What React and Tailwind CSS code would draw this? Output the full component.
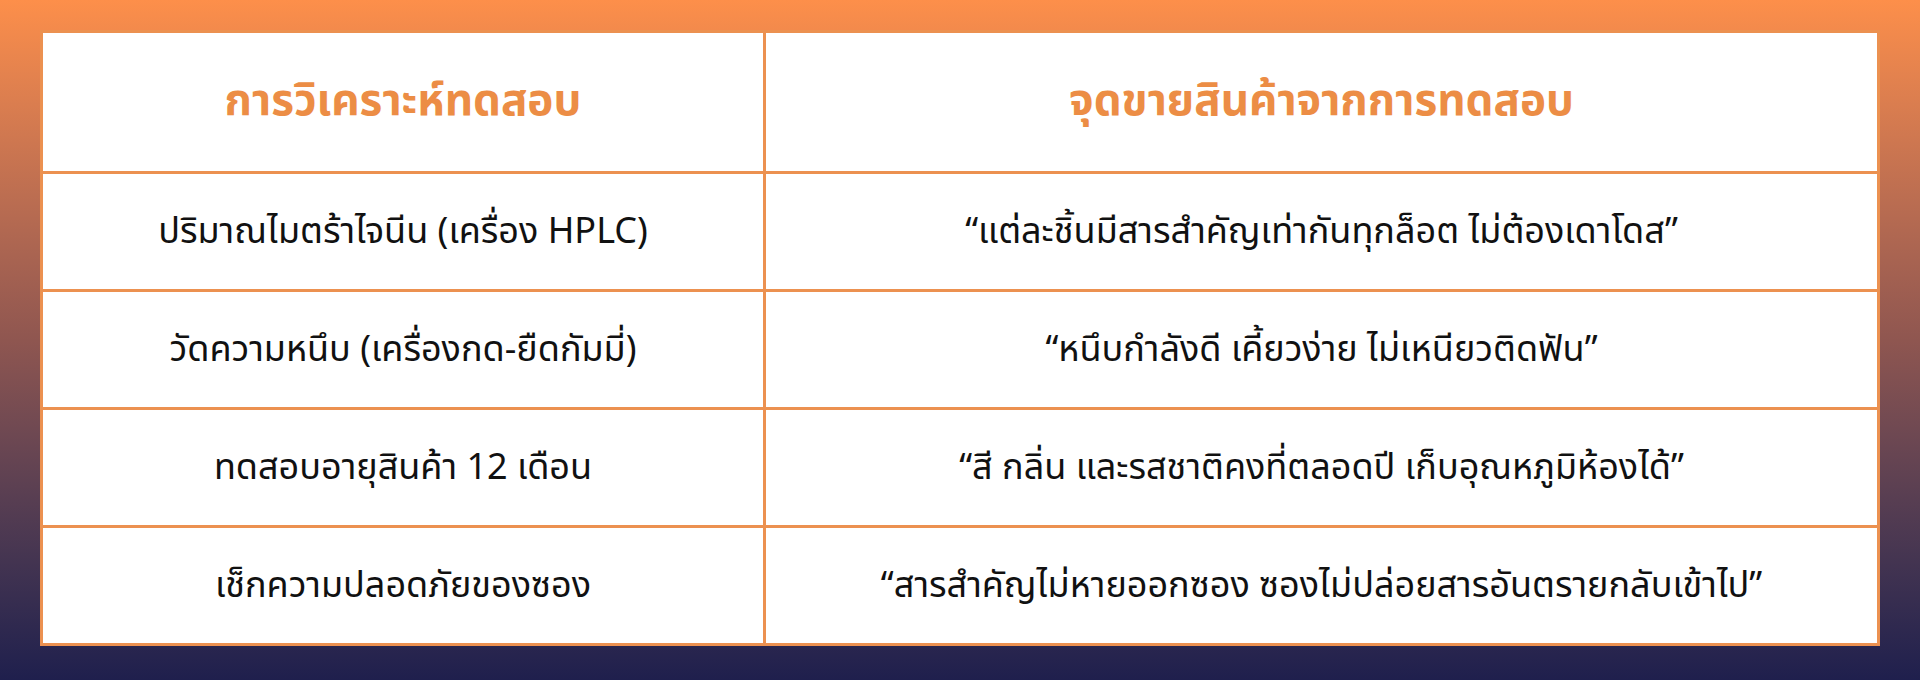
import React from "react";

const rows = [
  {
    test: "ปริมาณไมตร้าไจนีน (เครื่อง HPLC)",
    point: "“แต่ละชิ้นมีสารสำคัญเท่ากันทุกล็อต ไม่ต้องเดาโดส”",
  },
  {
    test: "วัดความหนึบ (เครื่องกด-ยืดกัมมี่)",
    point: "“หนึบกำลังดี เคี้ยวง่าย ไม่เหนียวติดฟัน”",
  },
  {
    test: "ทดสอบอายุสินค้า 12 เดือน",
    point: "“สี กลิ่น และรสชาติคงที่ตลอดปี เก็บอุณหภูมิห้องได้”",
  },
  {
    test: "เช็กความปลอดภัยของซอง",
    point: "“สารสำคัญไม่หายออกซอง ซองไม่ปล่อยสารอันตรายกลับเข้าไป”",
  },
];

const App = () => {
  return (
    <div className="w-full h-[680px] bg-linear-to-b from-[#fd8f4a] via-[#8f5650] via-50% to-[#1f1f4d] pt-[30px] px-[40px]">
      <table
        className="w-full border-collapse bg-white"
        style={{ fontFamily: '"Noto Sans Thai", "Noto Sans", sans-serif' }}
      >
        <thead>
          <tr className="h-[141px]">
            <th className="w-[723px] border-[3px] border-[#ec9150] text-[44px] font-bold text-[#ec8d45]">
              การวิเคราะห์ทดสอบ
            </th>
            <th className="border-[3px] border-[#ec9150] text-[44px] font-bold text-[#ec8d45]">
              จุดขายสินค้าจากการทดสอบ
            </th>
          </tr>
        </thead>
        <tbody>
          {rows.map((row, idx) => (
            <tr key={idx} className="h-[118px]">
              <td className="border-[3px] border-[#ec9150] text-center text-[36px] text-[#111]">
                {row.test}
              </td>
              <td className="border-[3px] border-[#ec9150] text-center text-[36px] text-[#111]">
                {row.point}
              </td>
            </tr>
          ))}
        </tbody>
      </table>
    </div>
  );
};

export default App;
